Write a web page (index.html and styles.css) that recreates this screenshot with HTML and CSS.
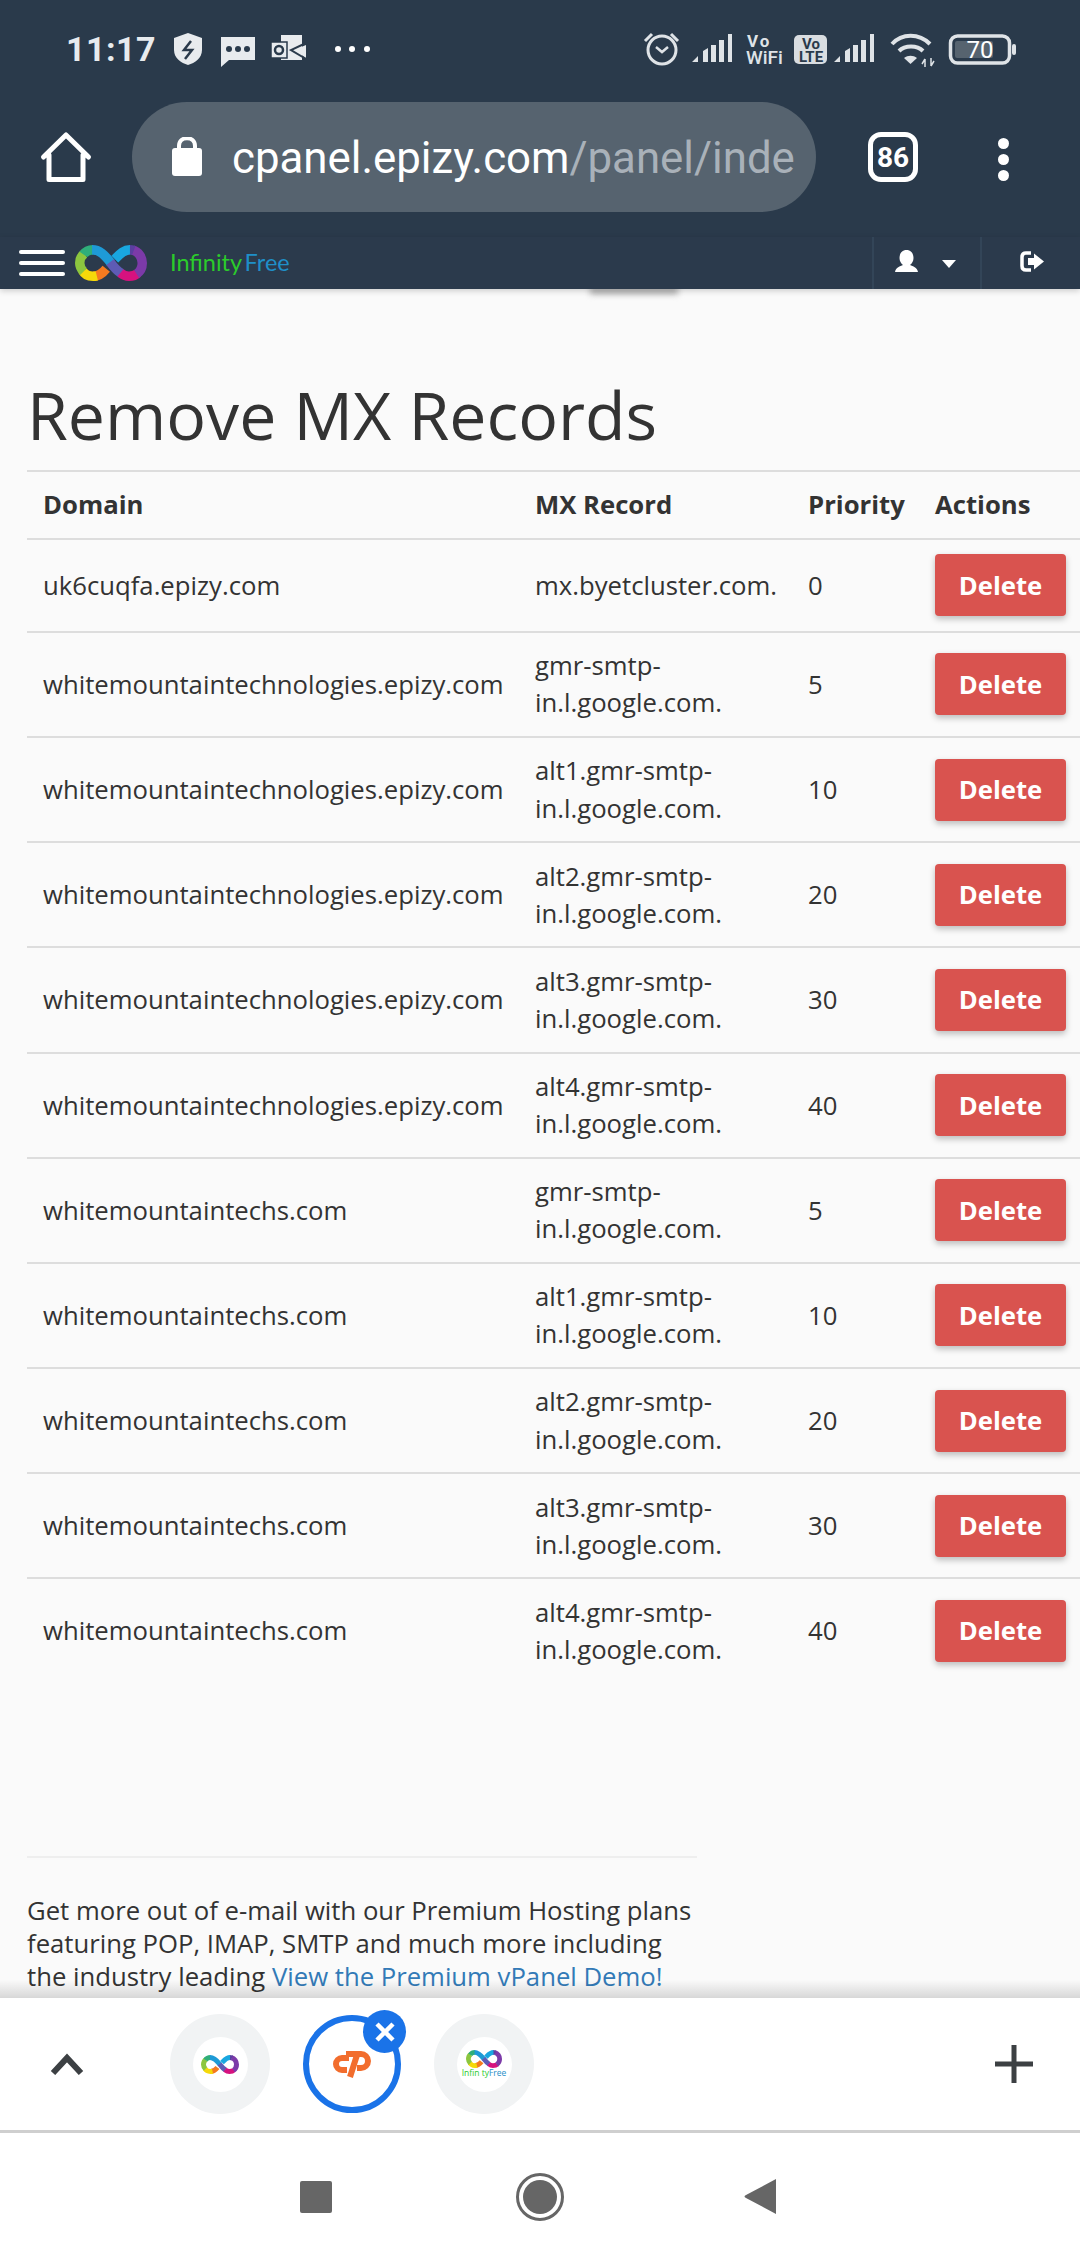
FILE: index.html
```html
<!DOCTYPE html>
<html lang="en">
<head>
  <meta charset="UTF-8" />
  <meta name="viewport" content="width=device-width, initial-scale=1.0"/>
  <title>Remove MX Records</title>
  <link rel="stylesheet" href="styles.css">
</head>
<body>
  <svg class="defs" width="0" height="0">
    <defs>
      <symbol id="infinity" viewBox="-1 -1 76 38">
        <g fill="none" stroke-width="10">
          <path stroke="#f47a20" d="M32 24 C28 29 24 32 18 32"/>
          <path stroke="#f5d90a" d="M22 31.500 C20 32 19 32 18 32 C13 32 9 30 7 26"/>
          <path stroke="#8cc63f" d="M8 27 C5 24 4 21 4 18 C4 14 6 10 9 8"/>
          <path stroke="#2fae7a" d="M8 9 C10 6 14 4 18 4"/>
          <path stroke="#1e9ad6" d="M17 4 C25 4 30 9 37 18"/>
          <path stroke="#5e5bb5" d="M36 17 C39 21 43 26 48 29"/>
          <path stroke="#d6127f" d="M47 28.500 C50 31 53 32 56 32 C60 32 63 31 65 29"/>
          <path stroke="#7c3aa8" d="M64 29.500 C68 27 70 23 70 18 C70 12 66 6 60 4.500"/>
          <path stroke="#5a3fa0" d="M61 4.800 C59 4 58 4 56 4"/>
          <path stroke="#19a7e0" d="M57 4 C50 4 46 9 41 14"/>
        </g>
      </symbol>
      <symbol id="signal" viewBox="0 0 42 30">
        <path fill="#dfe3e7" d="M0 28 L6 22 V28 Z M11 17 L16 14 V28 H11 Z M19 11 H24 V28 H19 Z M27 6 H32 V28 H27 Z M36 0 H40 V28 H36 Z"/>
      </symbol>
    </defs>
  </svg>

  <div class="screen">
    <div class="status">
      <span class="clock">11:17</span>
      <svg class="status-left" width="210" height="60" viewBox="170 19 210 60">
        <path fill="#e8ebee" d="M188 33 L202 38 V50 C202 58 195 63 188 65 C181 63 174 58 174 50 V38 Z"/>
        <polyline fill="none" stroke="#2a3a4b" stroke-width="2.500" points="191,41 184,50 192,50 185,59"/>
        <path fill="#e8ebee" d="M221 37 H255 V60 H229 L221 67 Z"/>
        <circle cx="229" cy="49" r="3" fill="#2a3a4b"/>
        <circle cx="238" cy="49" r="3" fill="#2a3a4b"/>
        <circle cx="247" cy="49" r="3" fill="#2a3a4b"/>
        <rect x="281" y="35" width="21" height="25" fill="#e8ebee"/>
        <polygon fill="#e8ebee" points="294,50 306,45 306,58"/>
        <polyline fill="none" stroke="#2a3a4b" stroke-width="2" points="306,43 291,50 306,59"/>
        <rect x="271" y="42" width="16" height="16" fill="#e8ebee" stroke="#2a3a4b" stroke-width="1.500"/>
        <circle cx="279" cy="50" r="4" fill="none" stroke="#2a3a4b" stroke-width="2.500"/>
        <circle cx="338" cy="49" r="3" fill="#fff"/>
        <circle cx="352" cy="49" r="3" fill="#fff"/>
        <circle cx="367" cy="49" r="3" fill="#fff"/>
      </svg>
      <svg class="status-right" width="380" height="60" viewBox="640 19 380 60">
        <g fill="none" stroke="#dfe3e7" stroke-width="3">
          <circle cx="662" cy="50" r="14"/>
          <polyline points="656,47 662,52 668,47" stroke-width="2.500"/>
          <path d="M645 41 L652 34 M671 34 L678 41"/>
        </g>
        <use href="#signal" x="692" y="34" width="42" height="30"/>
        <text class="sb-vo" x="747" y="47">Vo</text>
        <text class="sb-wifi" x="746" y="64">WiFi</text>
        <rect x="794" y="35" width="33" height="29" rx="5" fill="#d9dde1"/>
        <text class="sb-volte" x="811" y="49">Vo</text>
        <text class="sb-volte" x="811" y="62">LTE</text>
        <use href="#signal" x="834" y="34" width="42" height="30"/>
        <g fill="none" stroke="#dfe3e7" stroke-width="4">
          <path d="M892 44 C902 33 919 33 930 44"/>
          <path d="M899 51 C905 45 917 45 923 51"/>
        </g>
        <path fill="#dfe3e7" d="M904 58 C908 55 913 55 917 58 L910.500 64 Z"/>
        <path fill="none" stroke="#dfe3e7" stroke-width="1.500" d="M925 59 V67 M922 64 L925 59 M931 58 V66 M934 61 L931 66"/>
        <rect x="950.500" y="36" width="59" height="27" rx="7" fill="none" stroke="#dfe3e7" stroke-width="3.500"/>
        <rect x="955" y="41" width="38" height="17" rx="2" fill="#56636f"/>
        <text class="sb-batt" x="980" y="58">70</text>
        <rect x="1012" y="44" width="4" height="11" rx="2" fill="#dfe3e7"/>
      </svg>
    </div>

    <div class="toolbar">
      <svg class="home-icon" width="54" height="54" viewBox="39 130 54 54">
        <path fill="none" stroke="#fff" stroke-width="5" stroke-linecap="round" stroke-linejoin="round" d="M43.500 157 L66 135 L88.500 157 M49 155 V179.500 H83 V155"/>
      </svg>
      <div class="omnibox">
        <svg class="lock-icon" width="30" height="40" viewBox="0 0 30 40">
          <rect x="0" y="11" width="30" height="28" rx="3" fill="#fff"/>
          <path d="M7 12 V9 C7 -1.500 23 -1.500 23 9 V12" fill="none" stroke="#fff" stroke-width="4"/>
        </svg>
        <div class="url"><span class="url-host">cpanel.epizy.com</span>/panel/inde</div>
      </div>
      <div class="tab-count">86</div>
      <div class="kebab"><span></span><span></span><span></span></div>
    </div>

    <nav class="topnav">
      <div class="burger"><span></span><span></span><span></span></div>
      <svg class="logo" width="74" height="36"><use href="#infinity" width="74" height="36"/></svg>
      <div class="brand"><span class="brand-green">Infinity</span> <span class="brand-blue">Free</span></div>
      <div class="nav-cell nav-user">
        <svg width="23" height="22" viewBox="0 0 23 22">
          <path fill="#fff" d="M11.500 0 C16 0 18.500 3.500 18.500 8 C18.500 11 17 13.500 15 15 C18 16.500 22 17 23 22 H0 C1 17 5 16.500 8 15 C6 13.500 4.500 11 4.500 8 C4.500 3.500 7 0 11.500 0 Z"/>
        </svg>
        <span class="caret"></span>
      </div>
      <div class="nav-cell nav-logout">
        <svg width="24" height="21" viewBox="0 0 24 21">
          <path fill="none" stroke="#fff" stroke-width="3.500" d="M11 2 H6 C3.500 2 2 3.500 2 6 V15 C2 17.500 3.500 19 6 19 H11"/>
          <path fill="#fff" d="M8 7 H14 V2.500 L24 10.500 L14 18.500 V14 H8 Z"/>
        </svg>
      </div>
    </nav>

    <main class="page">
      <div class="nav-smudge"></div>
      <h1>Remove MX Records</h1>
      <table class="mx-table">
        <thead>
          <tr><th class="col-domain">Domain</th><th class="col-record">MX Record</th><th class="col-priority">Priority</th><th class="col-actions">Actions</th></tr>
        </thead>
        <tbody>
          <tr><td>uk6cuqfa.epizy.com</td><td>mx.byetcluster.com.</td><td>0</td><td><a class="btn-delete">Delete</a></td></tr>
          <tr><td>whitemountaintechnologies.epizy.com</td><td>gmr-smtp-<br>in.l.google.com.</td><td>5</td><td><a class="btn-delete">Delete</a></td></tr>
          <tr><td>whitemountaintechnologies.epizy.com</td><td>alt1.gmr-smtp-<br>in.l.google.com.</td><td>10</td><td><a class="btn-delete">Delete</a></td></tr>
          <tr><td>whitemountaintechnologies.epizy.com</td><td>alt2.gmr-smtp-<br>in.l.google.com.</td><td>20</td><td><a class="btn-delete">Delete</a></td></tr>
          <tr><td>whitemountaintechnologies.epizy.com</td><td>alt3.gmr-smtp-<br>in.l.google.com.</td><td>30</td><td><a class="btn-delete">Delete</a></td></tr>
          <tr><td>whitemountaintechnologies.epizy.com</td><td>alt4.gmr-smtp-<br>in.l.google.com.</td><td>40</td><td><a class="btn-delete">Delete</a></td></tr>
          <tr><td>whitemountaintechs.com</td><td>gmr-smtp-<br>in.l.google.com.</td><td>5</td><td><a class="btn-delete">Delete</a></td></tr>
          <tr><td>whitemountaintechs.com</td><td>alt1.gmr-smtp-<br>in.l.google.com.</td><td>10</td><td><a class="btn-delete">Delete</a></td></tr>
          <tr><td>whitemountaintechs.com</td><td>alt2.gmr-smtp-<br>in.l.google.com.</td><td>20</td><td><a class="btn-delete">Delete</a></td></tr>
          <tr><td>whitemountaintechs.com</td><td>alt3.gmr-smtp-<br>in.l.google.com.</td><td>30</td><td><a class="btn-delete">Delete</a></td></tr>
          <tr><td>whitemountaintechs.com</td><td>alt4.gmr-smtp-<br>in.l.google.com.</td><td>40</td><td><a class="btn-delete">Delete</a></td></tr>
        </tbody>
      </table>
      <div class="promo">
        <hr>
        <p>Get more out of e-mail with our Premium Hosting plans featuring POP, IMAP, SMTP and much more including the industry leading <a class="promo-link">View the Premium vPanel Demo!</a></p>
      </div>
    </main>

    <div class="tabstrip">
      <svg class="chevron" width="34" height="22" viewBox="0 0 34 22">
        <polyline fill="none" stroke="#3c4043" stroke-width="6" points="3,20 17,5 31,20"/>
      </svg>
      <div class="tab">
        <div class="tab-fav"><svg width="38" height="19"><use href="#infinity" width="38" height="19"/></svg></div>
      </div>
      <div class="tab tab-active">
        <svg width="40" height="28" viewBox="0 0 40 28">
          <g fill="none" stroke="#f26d2d" stroke-width="6">
            <path d="M17 8 H10 A6 6 0 0 0 10 20 H15"/>
            <path d="M14 4 H29 A7 7 0 0 1 29 18 H25"/>
            <path d="M25 5 L18 27"/>
          </g>
        </svg>
        <span class="tab-close">
          <svg width="20" height="20" viewBox="0 0 20 20"><path stroke="#fff" stroke-width="4.500" d="M2 2 L18 18 M18 2 L2 18"/></svg>
        </span>
      </div>
      <div class="tab">
        <div class="tab-fav tab-fav-text">
          <svg width="36" height="18"><use href="#infinity" width="36" height="18"/></svg>
          <div class="fav-label"><span class="brand-green">Infin ty</span><span class="brand-blue">Free</span></div>
        </div>
      </div>
      <svg class="plus" width="40" height="40" viewBox="0 0 40 40">
        <path stroke="#3c4043" stroke-width="5" d="M20 1 V39 M1 20 H39"/>
      </svg>
    </div>

    <div class="sysnav">
      <span class="sys-square"></span>
      <span class="sys-circle"><span></span></span>
      <svg class="sys-back" width="33" height="37" viewBox="0 0 33 37">
        <path fill="#666" d="M32 1 V36 L2 20 C0 19 0 18 2 17 Z"/>
      </svg>
    </div>
  </div>
</body>
</html>
```

FILE: styles.css
```css
* {
  box-sizing: border-box;
}
html, body {
  margin: 0;
  padding: 0;
}
body {
  font-family: "Open Sans", Arial, sans-serif;
  background-color: #fff;
  color: #333;
}
.defs {
  position: absolute;
}
.screen {
  width: 1080px;
  height: 2260px;
  display: flex;
  flex-direction: column;
  overflow: hidden;
}

/* phone status bar */
.status {
  height: 98px;
  flex: none;
  display: flex;
  align-items: center;
  background-color: #2a3a4b;
  padding-left: 66px;
}
.clock {
  font-family: Roboto, sans-serif;
  font-weight: 700;
  font-size: 34px;
  letter-spacing: 0.5px;
  color: #e8ebee;
  width: 104px;
}
.status-right {
  margin-left: auto;
  margin-right: 60px;
}
.sb-vo, .sb-wifi, .sb-volte, .sb-batt {
  font-family: Roboto, sans-serif;
}
.sb-vo {
  font-size: 17px;
  font-weight: 700;
  letter-spacing: 2px;
  fill: #dfe3e7;
}
.sb-wifi {
  font-size: 19px;
  font-weight: 500;
  fill: #dfe3e7;
}
.sb-volte {
  font-size: 15px;
  font-weight: 700;
  text-anchor: middle;
  fill: #2a3a4b;
}
.sb-batt {
  font-size: 24px;
  text-anchor: middle;
  fill: #fff;
}

/* browser toolbar */
.toolbar {
  height: 139px;
  flex: none;
  display: flex;
  align-items: flex-start;
  background-color: #2a3a4b;
  padding: 4px 0 0 39px;
}
.home-icon {
  margin-top: 28px;
}
.omnibox {
  width: 684px;
  height: 110px;
  margin-left: 39px;
  border-radius: 55px;
  background-color: #56636f;
  display: flex;
  align-items: center;
  padding-left: 40px;
}
.lock-icon {
  flex: none;
}
.url {
  font-family: Roboto, sans-serif;
  font-size: 43.800px;
  color: #a9b1b9;
  margin: 2px 0 0 30px;
  width: 565px;
  white-space: nowrap;
  overflow: hidden;
}
.url-host {
  color: #fff;
}
.tab-count {
  width: 50px;
  height: 50px;
  margin: 30px 0 0 52px;
  border: 5px solid #fff;
  border-radius: 13px;
  display: flex;
  align-items: center;
  justify-content: center;
  font-family: "Liberation Sans Narrow", Roboto, sans-serif;
  font-weight: 700;
  font-size: 28px;
  color: #fff;
}
.kebab {
  margin: 36px 0 0 80px;
  display: flex;
  flex-direction: column;
  gap: 5px;
}
.kebab span {
  width: 11px;
  height: 11px;
  border-radius: 50%;
  background-color: #fff;
}

/* site nav */
.topnav {
  height: 52px;
  flex: none;
  display: flex;
  align-items: center;
  background-color: #2b3a4c;
  padding-left: 19px;
  position: relative;
  z-index: 2;
  box-shadow: 0 2px 6px rgba(0, 0, 0, .18);
}
.burger {
  display: flex;
  flex-direction: column;
  gap: 7px;
}
.burger span {
  width: 46px;
  height: 4px;
  border-radius: 2px;
  background-color: #fff;
}
.logo {
  margin-left: 9px;
}
.brand {
  font-family: Lato, sans-serif;
  font-size: 23.500px;
  margin: 0 0 3px 22px;
  word-spacing: -3px;
}
.brand-green {
  color: #2bcb2b;
}
.brand-blue {
  color: #1f8fc8;
}
.nav-cell {
  height: 52px;
  display: flex;
  align-items: center;
  border-left: 2px solid #334558;
}
.nav-user {
  margin-left: auto;
  width: 108px;
  padding: 0 0 4px 21px;
}
.caret {
  margin: 5px 0 0 24px;
  border-top: 8px solid #fff;
  border-left: 7px solid transparent;
  border-right: 7px solid transparent;
}
.nav-logout {
  width: 100px;
  padding: 0 0 4px 38px;
}

/* page content */
.page {
  flex: 1;
  min-height: 0;
  overflow: hidden;
  background-color: #fafafa;
  padding-left: 27px;
  position: relative;
}
.nav-smudge {
  position: absolute;
  top: -2px;
  left: 590px;
  width: 88px;
  height: 7px;
  background-color: #a8a8a8;
  filter: blur(3px);
}
h1 {
  font-size: 66.200px;
  font-weight: 400;
  line-height: 80px;
  margin: 78px 0 0;
  padding-top: 7px;
  height: 103px;
  color: #333;
}
.mx-table {
  width: 1055px;
  table-layout: fixed;
  border-collapse: collapse;
  font-size: 25.700px;
  line-height: 37.200px;
}
.col-domain {
  width: 492px;
}
.col-record {
  width: 273px;
}
.col-priority {
  width: 127px;
}
.col-actions {
  width: 163px;
}
.mx-table th, .mx-table td {
  padding: 14.400px 16px;
  border-top: 2px solid #ddd;
  text-align: left;
  vertical-align: middle;
}
.mx-table th {
  font-weight: 700;
}
.btn-delete {
  display: inline-flex;
  align-items: center;
  justify-content: center;
  width: 131px;
  height: 62px;
  vertical-align: middle;
  border-radius: 4px;
  background-color: #d9534f;
  color: #fff;
  font-weight: 700;
  font-size: 25.700px;
  box-shadow: 0 3px 6px rgba(0, 0, 0, .25);
}
.promo {
  width: 670px;
}
.promo hr {
  border: none;
  border-top: 2px solid #eee;
  margin: 173px 0 0;
}
.promo p {
  margin: 36px 0 0;
  font-size: 25.700px;
  line-height: 33px;
}
.promo-link {
  color: #337ab7;
}

/* tab switcher */
.tabstrip {
  height: 135px;
  flex: none;
  display: flex;
  align-items: center;
  background-color: #fff;
  border-bottom: 3px solid #cfcfcf;
  padding: 0 46px 0 50px;
  position: relative;
  z-index: 2;
}
.tabstrip::before {
  content: "";
  position: absolute;
  left: 0;
  right: 0;
  top: -18px;
  height: 18px;
  background: linear-gradient(rgba(0, 0, 0, 0), rgba(0, 0, 0, .14));
}
.tab {
  width: 100px;
  height: 100px;
  border-radius: 50%;
  background-color: #f1f3f4;
  display: flex;
  align-items: center;
  justify-content: center;
  margin-left: 33px;
  flex: none;
  position: relative;
}
.chevron + .tab {
  margin-left: 86px;
}
.tab-fav {
  width: 55px;
  height: 55px;
  border-radius: 50%;
  background-color: #fff;
  display: flex;
  flex-direction: column;
  align-items: center;
  justify-content: center;
}
.fav-label {
  font-size: 8.500px;
  line-height: 10px;
  white-space: nowrap;
}
.tab-active {
  width: 98px;
  height: 98px;
  background-color: #fff;
  border: 6px solid #1a73e8;
}
.tab-close {
  position: absolute;
  top: -11px;
  right: -11px;
  width: 43px;
  height: 43px;
  border-radius: 50%;
  background-color: #1a73e8;
  display: flex;
  align-items: center;
  justify-content: center;
}
.plus {
  margin-left: auto;
}

/* android nav buttons */
.sysnav {
  height: 127px;
  flex: none;
  background-color: #fff;
  display: flex;
  align-items: center;
  padding-left: 300px;
}
.sys-square {
  width: 32px;
  height: 32px;
  border-radius: 2px;
  background-color: #666;
}
.sys-circle {
  width: 48px;
  height: 48px;
  margin-left: 184px;
  border-radius: 50%;
  border: 3px solid #666;
  display: flex;
  align-items: center;
  justify-content: center;
}
.sys-circle span {
  width: 34px;
  height: 34px;
  border-radius: 50%;
  background-color: #666;
}
.sys-back {
  margin-left: 180px;
}
```
